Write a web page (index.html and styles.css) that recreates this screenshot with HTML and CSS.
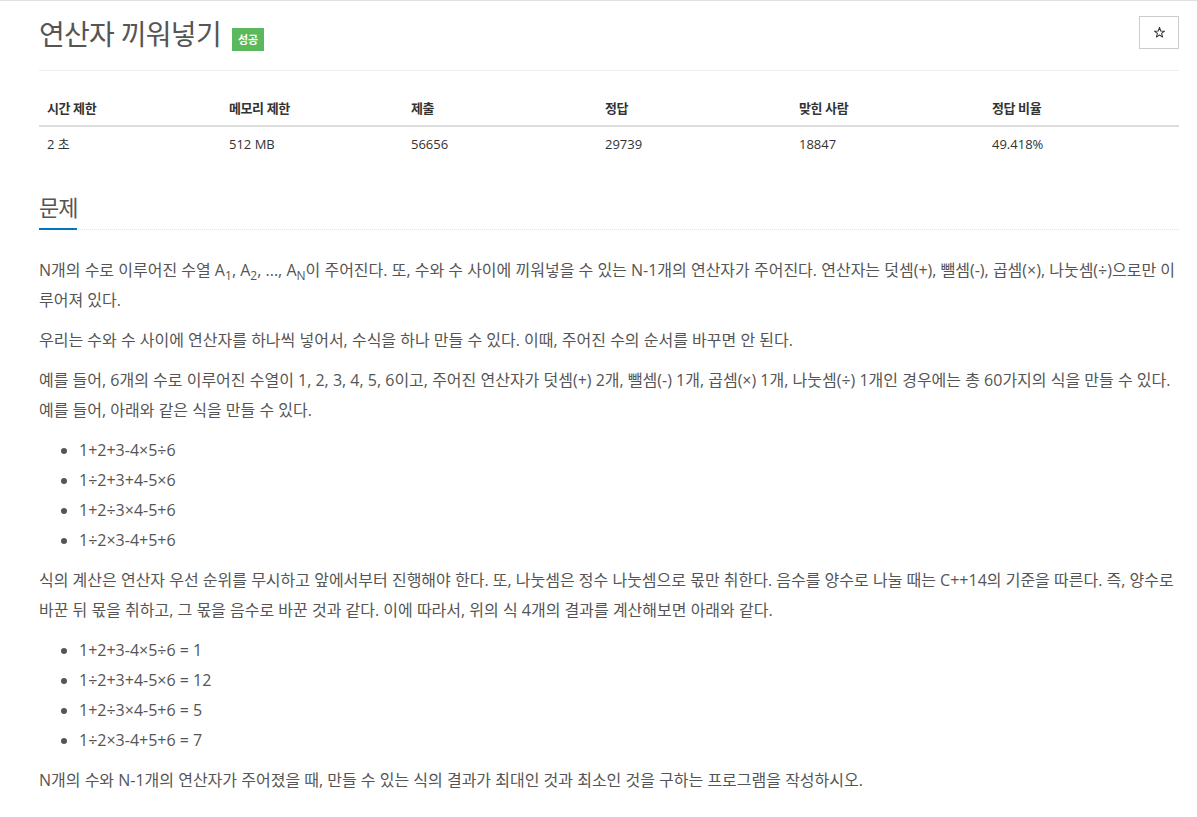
FILE: index.html
```html
<!DOCTYPE html>
<html lang="ko">

<head>
    <meta charset="UTF-8">
    <meta name="viewport" content="width=device-width, initial-scale=1.0">
    <title>연산자 끼워넣기</title>
    <link rel="stylesheet" href="styles.css">
</head>

<body>
    <div class="wrapper">
        <!-- 문제 제목 -->
        <div class="page-header">
            <h1 class="problem-title">
                <span>연산자 끼워넣기</span>
                <span class="label-success">성공</span>
            </h1>
            <button class="star-btn" type="button" aria-label="즐겨찾기">
                <svg class="star-icon" viewBox="0 0 12 12" width="11" height="11">
                    <polygon points="6,0.5 7.41,4.36 11.52,4.51 8.28,7.04 9.41,10.99 6,8.7 2.59,10.99 3.72,7.04 0.48,4.51 4.59,4.36" />
                </svg>
            </button>
        </div>

        <!-- 제한 정보 -->
        <table class="problem-info">
            <colgroup>
                <col class="col-a">
                <col class="col-a">
                <col class="col-b">
                <col class="col-b">
                <col class="col-c">
                <col>
            </colgroup>
            <thead>
                <tr>
                    <th>시간 제한</th>
                    <th>메모리 제한</th>
                    <th>제출</th>
                    <th>정답</th>
                    <th>맞힌 사람</th>
                    <th>정답 비율</th>
                </tr>
            </thead>
            <tbody>
                <tr>
                    <td>2 초</td>
                    <td>512 MB</td>
                    <td>56656</td>
                    <td>29739</td>
                    <td>18847</td>
                    <td>49.418%</td>
                </tr>
            </tbody>
        </table>

        <!-- 문제 -->
        <section class="problem-section">
            <div class="headline">
                <h2>문제</h2>
            </div>
            <div class="problem-text">
                <p>N개의 수로 이루어진 수열 A<sub>1</sub>, A<sub>2</sub>, ..., A<sub>N</sub>이 주어진다. 또, 수와 수 사이에 끼워넣을 수 있는 N-1개의 연산자가 주어진다. 연산자는 덧셈(+), 뺄셈(-), 곱셈(×), 나눗셈(÷)으로만 이루어져 있다.</p>
                <p>우리는 수와 수 사이에 연산자를 하나씩 넣어서, 수식을 하나 만들 수 있다. 이때, 주어진 수의 순서를 바꾸면 안 된다.</p>
                <p>예를 들어, 6개의 수로 이루어진 수열이 1, 2, 3, 4, 5, 6이고, 주어진 연산자가 덧셈(+) 2개, 뺄셈(-) 1개, 곱셈(×) 1개, 나눗셈(÷) 1개인 경우에는 총 60가지의 식을 만들 수 있다. 예를 들어, 아래와 같은 식을 만들 수 있다.</p>
                <ul>
                    <li>1+2+3-4×5÷6</li>
                    <li>1÷2+3+4-5×6</li>
                    <li>1+2÷3×4-5+6</li>
                    <li>1÷2×3-4+5+6</li>
                </ul>
                <p>식의 계산은 연산자 우선 순위를 무시하고 앞에서부터 진행해야 한다. 또, 나눗셈은 정수 나눗셈으로 몫만 취한다. 음수를 양수로 나눌 때는 C++14의 기준을 따른다. 즉, 양수로 바꾼 뒤 몫을 취하고, 그 몫을 음수로 바꾼 것과 같다. 이에 따라서, 위의 식 4개의 결과를 계산해보면 아래와 같다.</p>
                <ul>
                    <li>1+2+3-4×5÷6 = 1</li>
                    <li>1÷2+3+4-5×6 = 12</li>
                    <li>1+2÷3×4-5+6 = 5</li>
                    <li>1÷2×3-4+5+6 = 7</li>
                </ul>
                <p>N개의 수와 N-1개의 연산자가 주어졌을 때, 만들 수 있는 식의 결과가 최대인 것과 최소인 것을 구하는 프로그램을 작성하시오.</p>
            </div>
        </section>
    </div>
</body>

</html>
```

FILE: styles.css
```css
:root {
    --text-color: #555555;
    --dark-text: #333333;
    --line-color: #dddddd;
    --light-line: #eeeeee;
    --blue: #0076c0;
    --green: #5cb85c;
}

body {
    margin: 0;
    border-top: 1px solid #e0e0e0;
    background-color: #ffffff;
    color: var(--text-color);
    font-family: 'Open Sans', 'Noto Sans CJK KR', sans-serif;
    font-size: 16px;
}

.wrapper {
    width: 1140px;
    padding-left: 39px;
}

/* 제목 영역 */
.page-header {
    display: flex;
    justify-content: space-between;
    align-items: flex-start;
    padding-bottom: 19px;
    border-bottom: 1px solid var(--light-line);
}

.problem-title {
    display: flex;
    align-items: flex-start;
    margin: 0;
    padding-top: 17px;
    font-size: 28px;
    font-weight: normal;
    line-height: 33px;
    letter-spacing: -0.7px;
    color: var(--text-color);
}

.label-success {
    display: inline-block;
    margin: 10px 0 0 11px;
    padding: 0 6px;
    height: 23px;
    line-height: 23px;
    background-color: var(--green);
    color: #ffffff;
    font-size: 11px;
    font-weight: bold;
    letter-spacing: 0;
}

.star-btn {
    display: flex;
    align-items: center;
    justify-content: center;
    margin-top: 15px;
    width: 40px;
    height: 33px;
    padding: 0;
    border: 1px solid #cccccc;
    background: #ffffff;
}

.star-icon {
    fill: none;
    stroke: var(--dark-text);
    stroke-width: 1.1;
    stroke-linejoin: round;
}

/* 제한 표 */
.problem-info {
    width: 1140px;
    margin-top: 20px;
    border-collapse: collapse;
    table-layout: fixed;
    font-size: 13px;
    color: var(--dark-text);
}

.col-a {
    width: 182px;
}

.col-b {
    width: 194px;
}

.col-c {
    width: 193px;
}

.problem-info th,
.problem-info td {
    padding: 8px;
    line-height: 18px;
    text-align: left;
}

.problem-info th {
    font-weight: bold;
    letter-spacing: -0.4px;
    border-bottom: 2px solid var(--line-color);
}

/* 문제 본문 */
.problem-section {
    margin-top: 34px;
}

.headline {
    border-bottom: 1px dotted #e4e4e4;
}

.headline h2 {
    display: inline-block;
    margin: 0 0 -1px;
    padding-bottom: 9px;
    font-size: 22px;
    font-weight: normal;
    line-height: 24px;
    letter-spacing: -1px;
    border-bottom: 2px solid var(--blue);
}

.problem-text {
    margin-top: 25px;
    line-height: 30px;
}

.problem-text p {
    margin: 0 0 10px;
}

.problem-text sub {
    font-size: 75%;
    line-height: 0;
}

.problem-text ul {
    margin: 0 0 10px;
    padding-left: 40px;
}
```
